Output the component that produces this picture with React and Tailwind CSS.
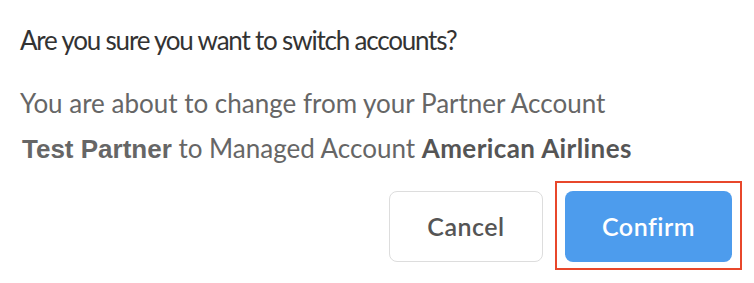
import React from "react";

export default function App() {
  return (
    <div className="w-[754px] h-[283px] bg-white font-['Lato',sans-serif] overflow-hidden">
      <div className="pt-[22px] pl-[20px] pr-[12px]">
        <h2 className="text-[26px] leading-[36px] tracking-[-1.2px] text-[#333333]">
          Are you sure you want to switch accounts?
        </h2>
        <div className="mt-[23px] text-[26px] text-[#666666]">
          <p className="leading-[45px]">
            You are about to change from your Partner Account
          </p>
          <p className="leading-[45px]">
            <span className="font-bold font-['Liberation_Sans',sans-serif] pl-[2px]">
              Test Partner
            </span>{" "}
            to Managed Account{" "}
            <span className="font-bold tracking-[0.4px] text-[#555555]">American Airlines</span>
          </p>
        </div>
        <div className="flex justify-end items-start gap-[12px] mt-[9px]">
          <button className="mt-[10px] w-[154px] h-[71px] rounded-[8px] border border-[#dddddd] bg-white text-[25px] tracking-[0.5px] font-semibold text-[#555555]">
            Cancel
          </button>
          <div className="border-2 border-[#e8472b] pt-[8px] pb-[6px] px-[8px]">
            <button className="w-[167px] h-[71px] rounded-[8px] bg-[#4d9ced] text-[25px] tracking-[0.5px] font-semibold text-white">
              Confirm
            </button>
          </div>
        </div>
      </div>
    </div>
  );
}
